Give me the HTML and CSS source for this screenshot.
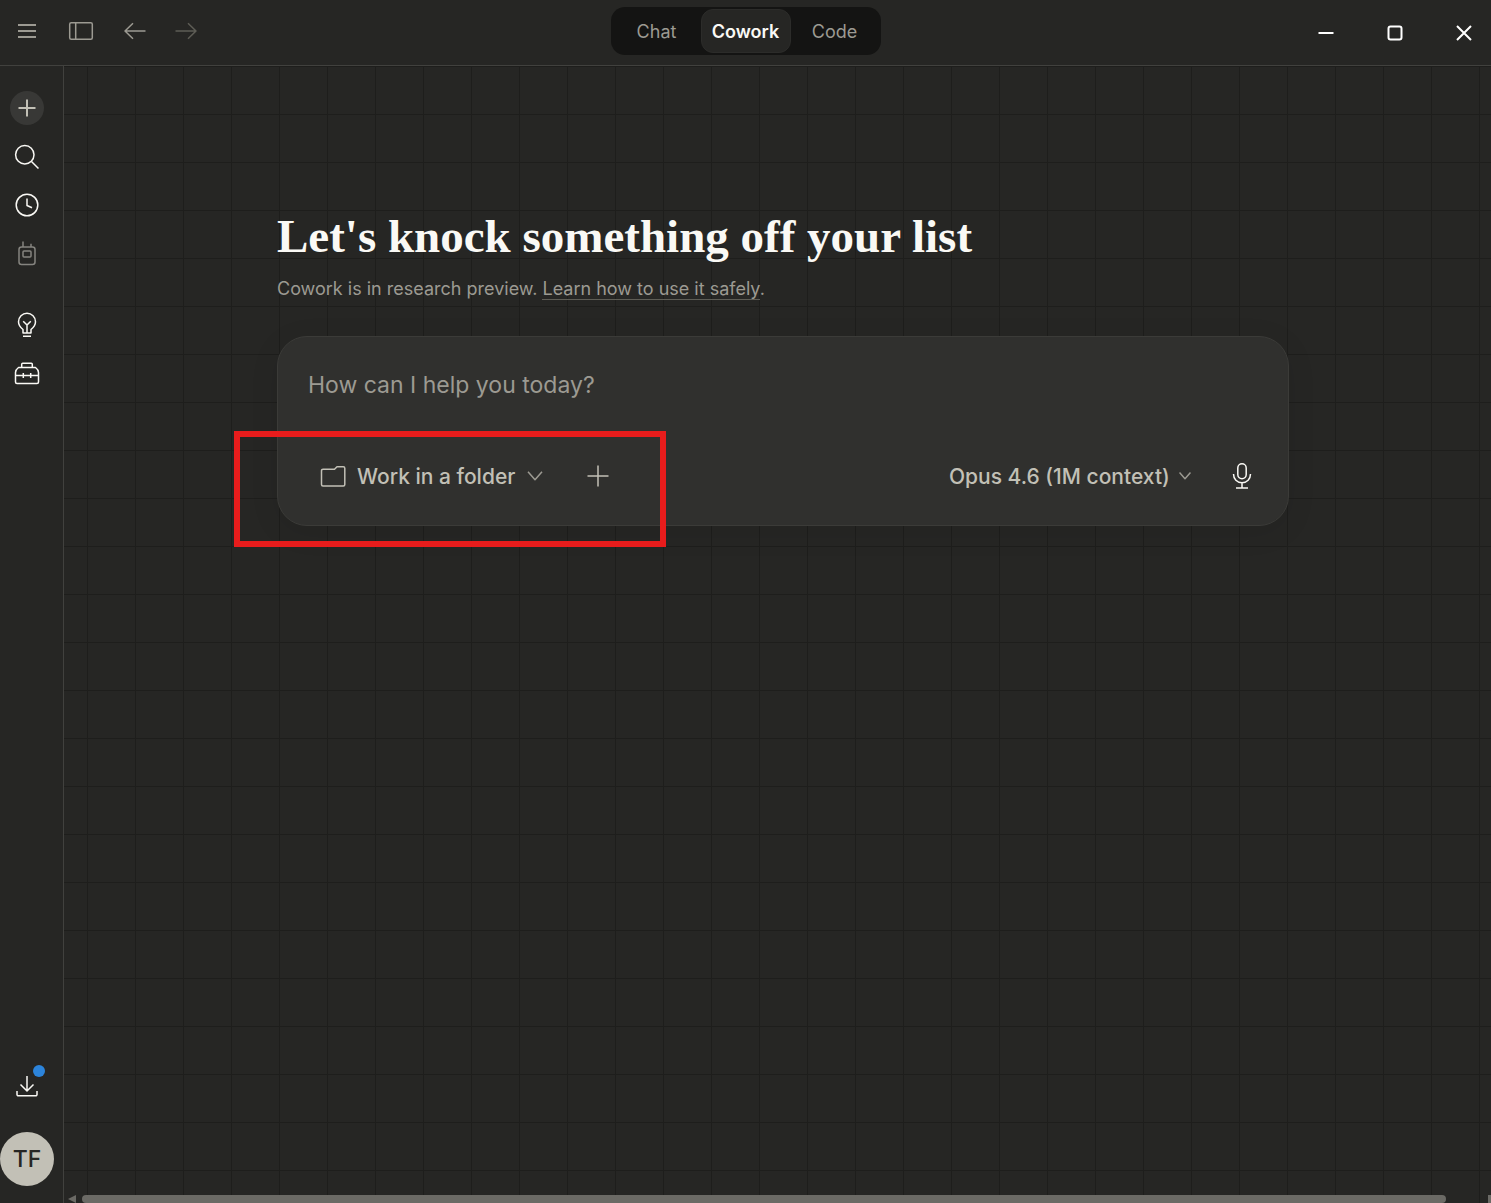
FILE: index.html
```html
<!DOCTYPE html>
<html lang="en">
<head>
  <meta charset="UTF-8" />
  <meta name="viewport" content="width=device-width, initial-scale=1.0"/>
  <title>Cowork</title>
  <link rel="stylesheet" href="styles.css">
</head>
<body>

<header class="titlebar">
  <div class="nav-buttons">
    <button class="icon-btn" aria-label="Menu">
      <svg width="24" height="24" viewBox="0 0 24 24" stroke-width="2"><path d="M3 6h18M3 12h18M3 18h18"/></svg>
    </button>
    <button class="icon-btn" aria-label="Toggle sidebar">
      <svg width="26" height="24" viewBox="0 0 26 24"><rect x="1.7" y="3.7" width="22.6" height="16.6" rx="1.5"/><path d="M7.7 4v16"/></svg>
    </button>
    <button class="icon-btn" aria-label="Back">
      <svg width="24" height="24" viewBox="0 0 24 24"><path d="M22.500 12H2M10 4.300L2 12l8 7.700"/></svg>
    </button>
    <button class="icon-btn disabled" aria-label="Forward" disabled>
      <svg width="24" height="24" viewBox="0 0 24 24"><path d="M1.500 12H22M14 4.300l8 7.700-8 7.700"/></svg>
    </button>
  </div>

  <nav class="tabs">
    <button>Chat</button>
    <button class="active">Cowork</button>
    <button>Code</button>
  </nav>

  <div class="window-buttons">
    <button class="icon-btn" aria-label="Minimize">
      <svg width="16" height="16" viewBox="0 0 16 16" stroke-width="2"><path d="M.5 8h15"/></svg>
    </button>
    <button class="icon-btn" aria-label="Maximize">
      <svg width="16" height="16" viewBox="0 0 16 16" stroke-width="2"><rect x="1.500" y="1.500" width="13" height="13" rx="2"/></svg>
    </button>
    <button class="icon-btn" aria-label="Close">
      <svg width="16" height="16" viewBox="0 0 16 16" stroke-width="2"><path d="M1 1l14 14M15 1L1 15"/></svg>
    </button>
  </div>
</header>

<div class="layout">
  <aside class="sidebar">
    <button class="side-btn new-btn" aria-label="New task">
      <span><svg width="24" height="24" viewBox="0 0 24 24" stroke-width="2"><path d="M12 3.500v17M3.500 12h17"/></svg></span>
    </button>
    <button class="side-btn" aria-label="Search">
      <svg width="28" height="28" viewBox="0 0 28 28"><circle cx="11.800" cy="11.800" r="9.200"/><path d="M18.500 18.500l7 7"/></svg>
    </button>
    <button class="side-btn" aria-label="History">
      <svg width="28" height="28" viewBox="0 0 28 28"><circle cx="14" cy="14" r="10.800"/><path d="M14 7.500v7l5 2.300"/></svg>
    </button>
    <button class="side-btn dim" aria-label="Dispatch">
      <svg width="28" height="28" viewBox="0 0 28 28"><rect x="6" y="8" width="16" height="17.500" rx="2.500"/><rect x="10" y="12" width="8" height="6" rx="1"/><path d="M10 8V2.500M18 8V4.800"/></svg>
    </button>
    <button class="side-btn gap-top" aria-label="Ideas">
      <svg width="28" height="28" viewBox="0 0 28 28"><path d="M10 22v-3.500C7.500 16.500 5.500 14.500 5.500 10.800a8.500 8.500 0 0 1 17 0c0 3.700-2 5.700-4.500 7.700V22zM10 25.200h8M14 21.500v-7.500M10.200 10.200L14 14l3.800-3.800"/></svg>
    </button>
    <button class="side-btn" aria-label="Customize">
      <svg width="28" height="28" viewBox="0 0 28 28"><path d="M5.500 8.500h17c2 1.500 3 3 3 5V23a1.500 1.500 0 0 1-1.500 1.500H4A1.500 1.500 0 0 1 2.500 23v-9.500c0-2 1-3.500 3-5zM8.700 8.500V5.300a1 1 0 0 1 1-1h8.600a1 1 0 0 1 1 1v3.200M2.500 16.500h7.500M11 16.500h6M18 16.500h7.500M10.300 14v5M17.700 14v5"/></svg>
    </button>

    <div class="sidebar-bottom">
      <button class="side-btn download" aria-label="Downloads">
        <svg width="28" height="28" viewBox="0 0 28 28"><path d="M14 4v15M7.500 12.500L14 19l6.500-6.500M4 19v3.500a1.300 1.300 0 0 0 1.300 1.300h17.400a1.300 1.300 0 0 0 1.300-1.300V19"/></svg>
        <span class="dot"></span>
      </button>
      <button class="avatar">TF</button>
    </div>
  </aside>

  <main class="workspace">
    <div class="content">
      <h1>Let's knock something off your list</h1>
      <p class="notice">Cowork is in research preview. <a href="#">Learn how to use it safely</a>.</p>

      <form class="composer">
        <input type="text" class="prompt" placeholder="How can I help you today?" aria-label="Prompt">
        <div class="composer-bar">
          <label class="picker">
            <svg width="26" height="26" viewBox="0 0 26 26"><path d="M3 6.200h11.500l2.500-2.500h6.300a1.500 1.500 0 0 1 1.500 1.500v16.300a1.500 1.500 0 0 1-1.500 1.500H3a1.500 1.500 0 0 1-1.500-1.500V7.700A1.500 1.500 0 0 1 3 6.200z"/></svg>
            <select aria-label="Folder"><option>Work in a folder</option></select>
            <svg class="chevron" width="16" height="16" viewBox="0 0 16 16"><path d="M1 3.800l7 8 7-8"/></svg>
          </label>
          <button type="button" class="add-btn" aria-label="Add files">
            <svg width="24" height="24" viewBox="0 0 24 24"><path d="M12 1.500v21M1.500 12h21"/></svg>
          </button>
          <label class="picker model">
            <select aria-label="Model"><option>Opus 4.6 (1M context)</option></select>
            <svg class="chevron" width="12" height="12" viewBox="0 0 12 12"><path d="M.5 2.500L6 8.800l5.500-6.300"/></svg>
          </label>
          <button type="button" class="mic-btn" aria-label="Dictate">
            <svg width="28" height="28" viewBox="0 0 28 28"><rect x="9.800" y="1.800" width="8.400" height="15" rx="4.200"/><path d="M5.500 12c0 5 3.500 8.700 8.500 8.700s8.500-3.700 8.500-8.700M14 20.700V26M8 26h12"/></svg>
          </button>
        </div>
        <div class="highlight"></div>
      </form>
    </div>

    <div class="scrollbar">
      <span class="arrow"></span>
      <span class="thumb"></span>
      <span class="arrow-end"></span>
    </div>
  </main>
</div>

</body>
</html>
```
FILE: styles.css
```css
* {
  box-sizing: border-box;
}
body {
  font-family: Inter, 'Liberation Sans', sans-serif;
  margin: 0;
  height: 100vh;
  display: flex;
  flex-direction: column;
  background: #262624;
  color: #faf9f5;
}
button,
input,
select {
  font-family: inherit;
  color: inherit;
  background: none;
  border: none;
  margin: 0;
  padding: 0;
}
button {
  cursor: pointer;
}
svg {
  display: block;
  flex-shrink: 0;
  fill: none;
  stroke: currentColor;
  stroke-width: 1.5;
  stroke-linejoin: round;
}
svg[stroke-width="2"] {
  stroke-width: 2;
}

/* title bar */
.titlebar {
  display: grid;
  grid-template-columns: 1fr auto 1fr;
  align-items: start;
  height: 66px;
  border-bottom: 1px solid #41413e;
}
.nav-buttons,
.window-buttons {
  display: flex;
  height: 62px;
}
.nav-buttons {
  color: #9c9a92;
}
.window-buttons {
  justify-content: flex-end;
  gap: 15px;
  height: 65px;
  color: #fff;
}
.icon-btn {
  width: 54px;
  display: flex;
  align-items: center;
  justify-content: center;
}
.icon-btn.disabled {
  width: 48px;
  color: #5e5d56;
}
.tabs {
  display: flex;
  margin-top: 7px;
  padding: 2px;
  height: 48px;
  background: #141413;
  border-radius: 14px;
}
.tabs button {
  width: 88px;
  font-size: 18px;
  color: #9c9a92;
  border-radius: 12px;
}
.tabs .active {
  width: 90px;
  font-weight: 600;
  color: #faf9f5;
  background: #262624;
  border: 1px solid #2c2c2a;
}

.layout {
  display: flex;
  flex: 1;
  min-height: 0;
}

/* sidebar */
.sidebar {
  width: 64px;
  padding: 18px 9px 17px 0;
  display: flex;
  flex-direction: column;
  border-right: 1px solid #41413e;
}
.side-btn {
  position: relative;
  width: 54px;
  height: 48px;
  flex-shrink: 0;
  display: flex;
  align-items: center;
  justify-content: center;
}
.new-btn {
  margin-bottom: 1px;
}
.new-btn span {
  padding: 5px;
  border-radius: 50%;
  background: #383836;
  color: #c2c0b6;
}
.side-btn.dim {
  color: #85847f;
}
.gap-top {
  margin-top: 24px;
}
.sidebar-bottom {
  margin-top: auto;
  display: flex;
  flex-direction: column;
  gap: 22px;
}
.dot {
  position: absolute;
  top: 3px;
  right: 9px;
  width: 12px;
  height: 12px;
  border-radius: 50%;
  background: #2c84db;
}
.avatar {
  width: 54px;
  height: 54px;
  border-radius: 50%;
  background: #c2c0b6;
  color: #262624;
  font-size: 23px;
  font-weight: 500;
}

/* workspace */
.workspace {
  flex: 1;
  min-width: 0;
  display: flex;
  flex-direction: column;
  background-image:
    linear-gradient(#1e1e1c 1px, transparent 1px),
    linear-gradient(90deg, #1e1e1c 1px, transparent 1px);
  background-size: 48px 48px;
  background-position: 23px 0;
}
.content {
  width: 100%;
  max-width: 1023px;
  margin: 0 auto;
  padding: 142px 0 0 11px;
}
h1 {
  margin: 0;
  font-family: 'Liberation Serif', serif;
  font-size: 47px;
  line-height: 56px;
  font-weight: 700;
}
.notice {
  margin: 13px 0 35px;
  font-size: 18px;
  line-height: 24px;
  color: #9c9a92;
}
.notice a {
  color: inherit;
  text-decoration: none;
  border-bottom: 1px solid #5e5d56;
}
.composer {
  position: relative;
  padding: 27px 30px 25px;
  background: #30302e;
  border: 1px solid #3b3b38;
  border-radius: 30px;
  box-shadow: 0 6px 30px rgba(0, 0, 0, 0.08);
}
.prompt {
  display: block;
  width: 100%;
  height: 42px;
  font-size: 23px;
  outline: none;
}
.prompt::placeholder {
  color: #9c9a92;
  opacity: 1;
}
.composer-bar {
  display: flex;
  align-items: center;
  margin-top: 46px;
  height: 48px;
  padding: 0 2px 0 12px;
  color: #c2c0b6;
}
.picker {
  display: flex;
  align-items: center;
  gap: 11px;
}
.picker select {
  appearance: none;
  font-size: 21px;
  font-weight: 500;
  outline: none;
}
.picker .chevron {
  color: #9c9a92;
}
.picker.model {
  margin-left: auto;
  gap: 9px;
}
.add-btn {
  margin-left: 43px;
}
.mic-btn {
  margin-left: 37px;
  color: #faf9f5;
}
.highlight {
  position: absolute;
  left: -44px;
  top: 94px;
  width: 432px;
  height: 116px;
  border: 6px solid #e81c1c;
  pointer-events: none;
}

/* horizontal scrollbar */
.scrollbar {
  display: flex;
  margin-top: auto;
  height: 8px;
}
.arrow {
  margin: 0 6px 0 4px;
  border: solid transparent;
  border-width: 4px 8px 4px 0;
  border-right-color: #6b6a65;
}
.thumb {
  flex: 1;
  background: #6b6a65;
  border-radius: 4px;
}
.arrow-end {
  width: 3px;
  margin-left: 42px;
  background: #6b6a65;
}
```
